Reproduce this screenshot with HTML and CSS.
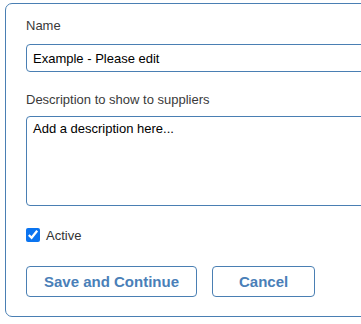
FILE: index.html
```html
<!DOCTYPE html>
<html>
<head>
<meta charset="utf-8">
<link rel="stylesheet" href="styles.css">
</head>
<body>
<form class="card">
  <div class="field">
    <label class="label" for="name">Name</label>
    <input class="input" id="name" type="text" value="Example - Please edit">
  </div>
  <div class="field">
    <label class="label" for="desc">Description to show to suppliers</label>
    <textarea class="textarea" id="desc">Add a description here...</textarea>
  </div>
  <label class="check">
    <input class="checkbox" type="checkbox" checked>
    <span>Active</span>
  </label>
  <div class="actions">
    <button type="button" class="btn btn-save">Save and Continue</button>
    <button type="button" class="btn btn-cancel">Cancel</button>
  </div>
</form>
</body>
</html>
```
FILE: styles.css
```css
html, body {
  margin: 0;
  padding: 0;
  background: #ffffff;
}
body {
  font-family: "Liberation Sans", Arial, sans-serif;
  font-size: 13px;
  color: #333333;
  overflow: hidden;
}
.card {
  margin: 3px 0 0 5px;
  width: 420px;
  box-sizing: border-box;
  border: 1px solid #4a7fb3;
  border-radius: 7px;
  padding: 14px 20px 19px 20px;
  display: flex;
  flex-direction: column;
}
.field {
  display: flex;
  flex-direction: column;
  margin-bottom: 20px;
}
.label {
  display: block;
  line-height: 16px;
  color: #3a3a3a;
  margin-bottom: 10px;
}
.field + .field .label {
  margin-bottom: 8px;
}
.input,
.textarea {
  font-family: "Liberation Sans", Arial, sans-serif;
  font-size: 13px;
  color: #000000;
  border: 1px solid #4a7fb3;
  border-radius: 4px;
  box-sizing: border-box;
  width: 100%;
  margin: 0;
  outline: none;
  background: #ffffff;
}
.input {
  height: 28px;
  padding: 0 6px;
}
.textarea {
  height: 90px;
  padding: 4px 6px;
  resize: none;
  line-height: 16px;
}
.check {
  display: flex;
  align-items: center;
  gap: 6px;
  height: 16px;
  margin-top: 1px;
  color: #333333;
}
.checkbox {
  width: 14px;
  height: 14px;
  margin: 0;
  accent-color: #0b74f0;
}
.actions {
  display: flex;
  gap: 15px;
  margin-top: 23px;
}
.btn {
  font-family: "Liberation Sans", Arial, sans-serif;
  font-size: 15px;
  font-weight: bold;
  color: #4a7fb8;
  background: #ffffff;
  border: 1px solid #4a7fb3;
  border-radius: 4px;
  height: 31px;
  padding: 0 17px;
  cursor: pointer;
}
.btn-cancel {
  padding: 0 26px;
}
```
